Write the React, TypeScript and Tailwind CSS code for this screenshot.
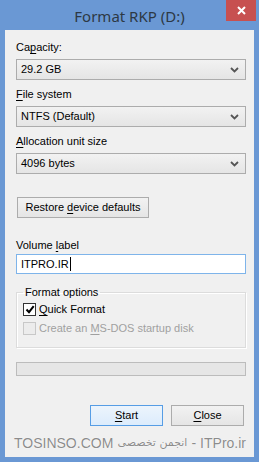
import React from "react";

const Chevron = () => (
  <svg width="9" height="6" viewBox="0 0 9 6" className="block">
    <polyline points="1,1 4.5,4.5 8,1" fill="none" stroke="#555" strokeWidth="1.8" />
  </svg>
);

const Combo = ({ value }: { value: string }) => (
  <div className="h-[21px] w-[230px] border border-[#acacac] bg-gradient-to-b from-[#f2f2f2] to-[#e5e5e5] flex items-center justify-between pl-[4px] pr-[6px] text-black">
    <span>{value}</span>
    <Chevron />
  </div>
);

export default function App() {
  return (
    <div
      className="w-[259px] h-[462px] bg-[#6a98d4] flex flex-col overflow-hidden text-[11px] leading-[13px] text-black"
      style={{ fontFamily: '"Liberation Sans", Arial, sans-serif' }}
    >
      <div className="h-[30px] flex items-start relative">
        <div
          className="flex-1 text-center pt-[6px] text-[15px] leading-[20px] text-[#2d3844]"
          style={{ fontFamily: '"Noto Sans", "Open Sans", sans-serif' }}
        >
          Format RKP (D:)
        </div>
        <div className="absolute right-[3px] top-0 w-[30px] h-[21px] bg-[#c75050] flex items-center justify-center">
          <svg width="9" height="9" viewBox="0 0 9 9">
            <path d="M1 1 L8 8 M8 1 L1 8" stroke="#fff" strokeWidth="2" />
          </svg>
        </div>
      </div>

      <div className="flex-1 mx-[5px] mb-[5px] bg-[#f0f0f0] pl-[11px] pr-[8px] pt-[11px] flex flex-col">
        <div className="mb-[5px]">
          Ca<u className="underline-offset-2">p</u>acity:
        </div>
        <Combo value="29.2 GB" />

        <div className="mt-[8px] mb-[5px]">
          <u className="underline-offset-2">F</u>ile system
        </div>
        <Combo value="NTFS (Default)" />

        <div className="mt-[8px] mb-[5px]">
          <u className="underline-offset-2">A</u>llocation unit size
        </div>
        <Combo value="4096 bytes" />

        <div className="mt-[23px] ml-[1px] h-[21px] w-[132px] border border-[#acacac] bg-gradient-to-b from-[#f2f2f2] to-[#e5e5e5] flex items-center justify-center">
          <span>
            Restore <u className="underline-offset-2">d</u>evice defaults
          </span>
        </div>

        <div className="mt-[21px] mb-[2px]">
          Volume <u className="underline-offset-2">l</u>abel
        </div>
        <div className="h-[20px] w-[230px] border border-[#7eb4ea] bg-white flex items-center pl-[4px]">
          <span>ITPRO.IR</span>
          <span className="inline-block w-[1px] h-[14px] bg-black ml-[1px]" />
        </div>

        <fieldset className="mt-[12px] w-[230px] h-[62px] border border-[#dcdcdc] shadow-[inset_1px_1px_0_#fff,1px_1px_0_#fff] px-[6px] m-0 min-w-0">
          <legend className="px-[2px] ml-[0px] text-black">Format options</legend>
          <div className="flex items-center mt-[4px]">
            <div className="w-[13px] h-[13px] border border-[#333] bg-white flex items-center justify-center">
              <svg width="10" height="9" viewBox="0 0 10 9">
                <polyline points="1.5,4.5 4,7.2 8.7,1.2" fill="none" stroke="#000" strokeWidth="2" />
              </svg>
            </div>
            <span className="ml-[3px]">
              <u className="underline-offset-2">Q</u>uick Format
            </span>
          </div>
          <div className="flex items-center mt-[6px] text-[#a0a0a0]">
            <div className="w-[13px] h-[13px] border border-[#c8c8c8] bg-[#ececec]" />
            <span className="ml-[3px]">
              Create an <u className="underline-offset-2">M</u>S-DOS startup disk
            </span>
          </div>
        </fieldset>

        <div className="mt-[14px] w-[230px] h-[14px] border border-[#bcbcbc] bg-[#e6e6e6]" />

        <div className="mt-[29px] flex gap-[8px] ml-[74px]">
          <div className="w-[73px] h-[21px] border border-[#569de5] bg-gradient-to-b from-[#ecf4fc] to-[#dcecfc] flex items-center justify-center">
            <span>
              <u className="underline-offset-2">S</u>tart
            </span>
          </div>
          <div className="w-[73px] h-[21px] border border-[#acacac] bg-gradient-to-b from-[#f2f2f2] to-[#e5e5e5] flex items-center justify-center">
            <span>
              <u className="underline-offset-2">C</u>lose
            </span>
          </div>
        </div>

        <div
          className="mt-[9px] -ml-[2px] w-[232px] flex justify-between items-center text-[14px] leading-[16px] text-[#8c8c8c]"
          style={{ textShadow: "0 0 1px #fff, 0 0 1px #fff" }}
          dir="ltr"
        >
          <span className="relative">TOSINSO.COM</span>
          <span style={{ fontFamily: '"DejaVu Sans", "Liberation Sans", sans-serif' }} className="text-[11px]">
            انجمن تخصصی
          </span>
          <span>- ITPro.ir</span>
        </div>
      </div>
    </div>
  );
}
